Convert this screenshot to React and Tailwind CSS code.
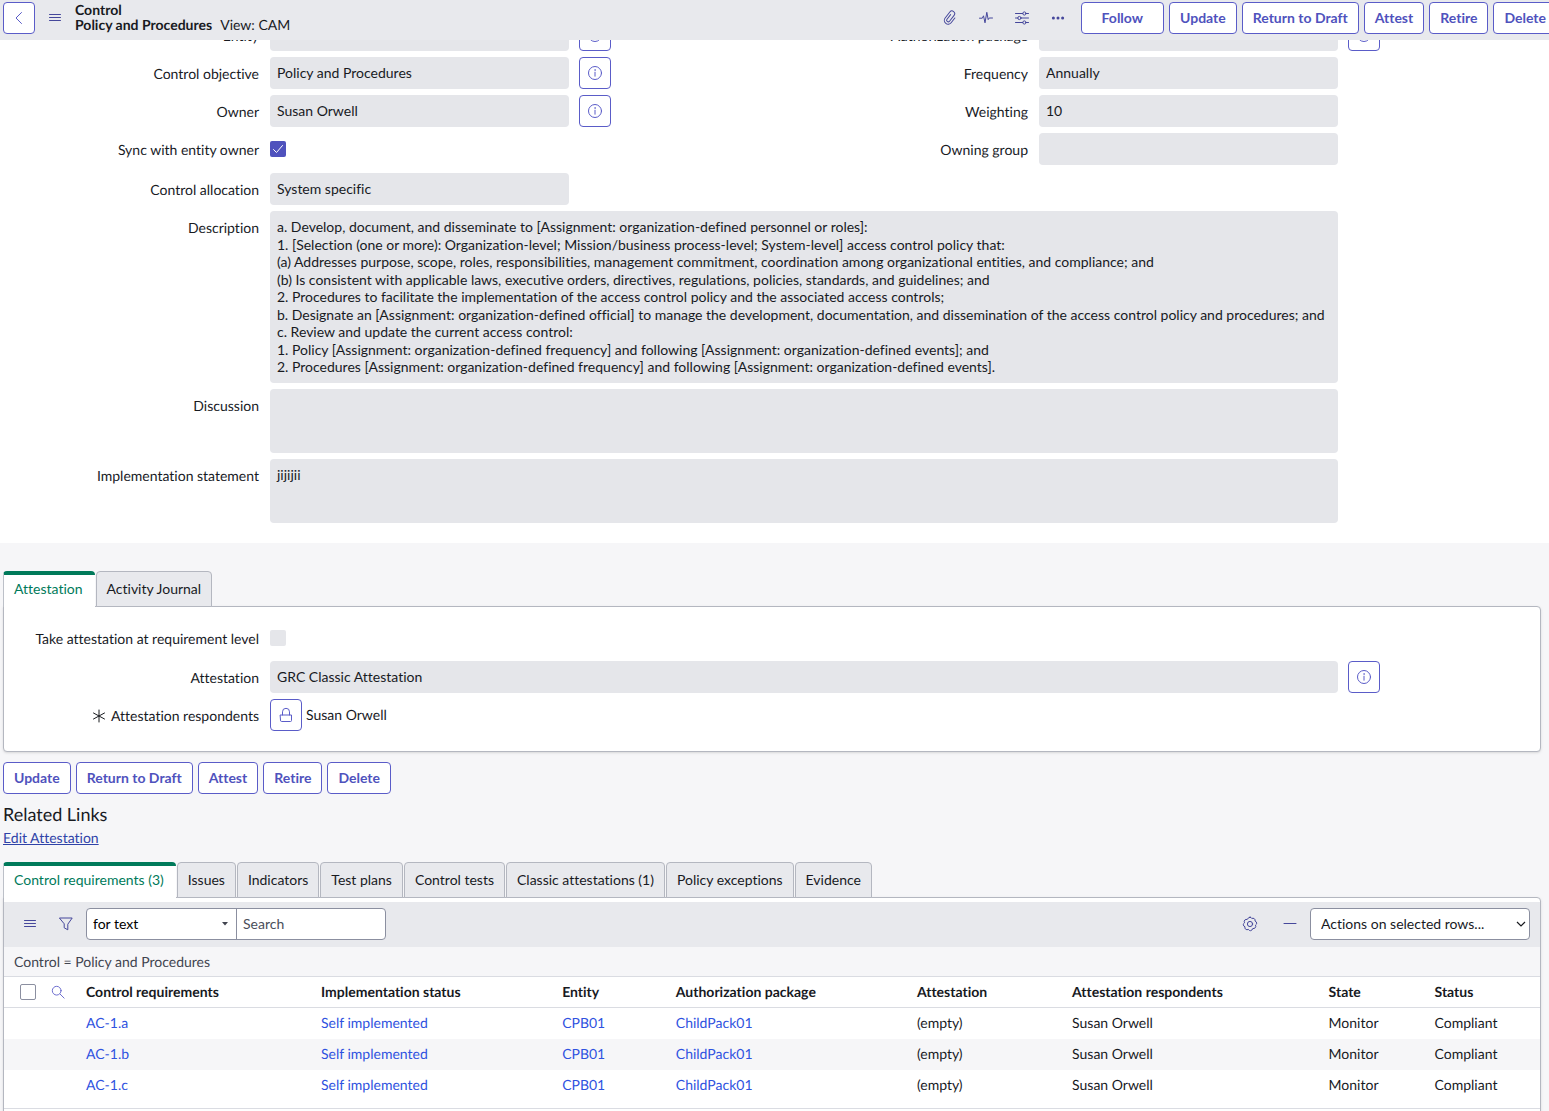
import { useState } from "react";

const requirementRows = [
  { id: "AC-1.a", impl: "Self implemented", entity: "CPB01", pkg: "ChildPack01", attestation: "(empty)", respondent: "Susan Orwell", state: "Monitor", status: "Compliant" },
  { id: "AC-1.b", impl: "Self implemented", entity: "CPB01", pkg: "ChildPack01", attestation: "(empty)", respondent: "Susan Orwell", state: "Monitor", status: "Compliant" },
  { id: "AC-1.c", impl: "Self implemented", entity: "CPB01", pkg: "ChildPack01", attestation: "(empty)", respondent: "Susan Orwell", state: "Monitor", status: "Compliant" },
];

const columns = [
  "Control requirements",
  "Implementation status",
  "Entity",
  "Authorization package",
  "Attestation",
  "Attestation respondents",
  "State",
  "Status",
];

const relatedTabs = [
  "Control requirements (3)",
  "Issues",
  "Indicators",
  "Test plans",
  "Control tests",
  "Classic attestations (1)",
  "Policy exceptions",
  "Evidence",
];

const formActions = ["Update", "Return to Draft", "Attest", "Retire", "Delete"];

const description = [
  "a. Develop, document, and disseminate to [Assignment: organization-defined personnel or roles]:",
  "1. [Selection (one or more): Organization-level; Mission/business process-level; System-level] access control policy that:",
  "(a) Addresses purpose, scope, roles, responsibilities, management commitment, coordination among organizational entities, and compliance; and",
  "(b) Is consistent with applicable laws, executive orders, directives, regulations, policies, standards, and guidelines; and",
  "2. Procedures to facilitate the implementation of the access control policy and the associated access controls;",
  "b. Designate an [Assignment: organization-defined official] to manage the development, documentation, and dissemination of the access control policy and procedures; and",
  "c. Review and update the current access control:",
  "1. Policy [Assignment: organization-defined frequency] and following [Assignment: organization-defined events]; and",
  "2. Procedures [Assignment: organization-defined frequency] and following [Assignment: organization-defined events].",
].join("\n");

function Icon({ size = 16, className = "", children }) {
  return (
    <svg
      width={size}
      height={size}
      viewBox="0 0 16 16"
      fill="none"
      stroke="currentColor"
      strokeWidth="1"
      strokeLinecap="round"
      strokeLinejoin="round"
      className={`shrink-0 ${className}`}
      aria-hidden="true"
    >
      {children}
    </svg>
  );
}

const MenuIcon = () => (
  <Icon><path d="M2.500 4.500h11M2.500 7.500h11M2.500 10.500h11" /></Icon>
);

const InfoIcon = () => (
  <Icon>
    <circle cx="8" cy="8" r="6.5" />
    <path d="M8 7.2v4" />
    <circle cx="8" cy="5" r="0.4" fill="currentColor" strokeWidth="0.6" />
  </Icon>
);

const PaperclipIcon = () => (
  <Icon>
    <g transform="rotate(38 8 8)">
      <path d="M11.8 5v6a3.800 3.800 0 0 1-7.600 0V3.400a2.700 2.700 0 0 1 5.400 0v7.400a1.600 1.600 0 0 1-3.200 0V5" />
    </g>
  </Icon>
);

const PulseIcon = () => (
  <Icon><path d="M1.500 8.200h2.800l1.200-2.400 1.500 7L8.800 2.300l1.400 7.300 1-1.600h3.300" /></Icon>
);

const SlidersIcon = () => (
  <Icon>
    <path d="M1.5 3.5h7.3M12 3.5h2.5M1.5 8h2.3M7 8h7.5M1.5 12.5h7.3M12 12.5h2.5" />
    <circle cx="10.4" cy="3.5" r="1.6" />
    <circle cx="5.4" cy="8" r="1.6" />
    <circle cx="10.4" cy="12.5" r="1.6" />
  </Icon>
);

const DotsIcon = () => (
  <Icon>
    <g fill="currentColor" stroke="none">
      <circle cx="3.4" cy="8" r="1.5" />
      <circle cx="8" cy="8" r="1.5" />
      <circle cx="12.6" cy="8" r="1.5" />
    </g>
  </Icon>
);

const GearIcon = () => (
  <Icon>
    <path d="M8 1.2Q9.3 1.1 9.8 2.5Q11 1.8 12.3 2.7Q13.5 3.7 13 5Q14.6 5.6 14.7 7.2Q14.7 8.3 13.5 9.1Q14.2 10.6 13.2 11.8Q12.2 12.8 10.8 12.5Q10.2 14.4 8.6 14.7Q7.2 14.8 6.4 13.4Q4.9 14.2 3.6 13.2Q2.5 12.2 3 10.8Q1.4 10.2 1.3 8.7Q1.3 7.5 2.5 6.8Q1.8 5.2 2.8 4Q3.9 3 5.2 3.5Q6.2 1.3 8 1.2z" />
    <circle cx="8" cy="8" r="2.6" />
  </Icon>
);

function Button({ children, className = "px-[10px]" }) {
  return (
    <button className={`h-8 shrink-0 rounded border border-[#5a5cc8] bg-white text-sm font-bold text-[#4f52bd] ${className}`}>
      {children}
    </button>
  );
}

function IconButton({ label, children }) {
  return (
    <button
      aria-label={label}
      className="flex h-8 w-8 shrink-0 items-center justify-center rounded border border-[#5a5cc8] bg-white text-[#5a5cc8]"
    >
      {children}
    </button>
  );
}

function ToolButton({ label, children }) {
  return (
    <button aria-label={label} className="flex h-8 w-9 shrink-0 items-center justify-center text-[#45479b]">
      {children}
    </button>
  );
}

function FieldRow({ id, label, required, info, align = "items-center", children }) {
  return (
    <div className={`flex ${align}`}>
      <label htmlFor={id} className="flex min-h-8 w-[270px] shrink-0 items-center justify-end pt-[2px] pr-[11px] text-right">
        {required && (
          <Icon className="mr-1"><path d="M8 2v12M2.5 5l11 6M13.5 5l-11 6" /></Icon>
        )}
        {label}
      </label>
      <div className="flex min-w-0 flex-1 items-center">{children}</div>
      <div className="w-[200px] shrink-0 pl-[10px]">
        {info && <IconButton label={`Preview ${label}`}><InfoIcon /></IconButton>}
      </div>
    </div>
  );
}

function TextField({ id, label, value, info }) {
  return (
    <FieldRow id={id} label={label} info={info}>
      <input id={id} readOnly defaultValue={value} className="h-8 w-full min-w-0 rounded-sm bg-[#e5e6ea] px-[7px] pb-[2px] outline-none" />
    </FieldRow>
  );
}

function AreaField({ id, label, value, className }) {
  return (
    <FieldRow id={id} label={label} align="items-start">
      <textarea
        id={id}
        readOnly
        defaultValue={value}
        className={`block w-full resize-none overflow-hidden rounded-sm bg-[#e5e6ea] p-[7px] leading-tight outline-none ${className}`}
      />
    </FieldRow>
  );
}

function Tabs({ tabs, active, onSelect }) {
  return (
    <div role="tablist" className="relative z-10 -mb-px flex gap-px">
      {tabs.map((tab) => (
        <button
          key={tab}
          role="tab"
          aria-selected={tab === active}
          onClick={() => onSelect(tab)}
          className={
            tab === active
              ? "h-9 rounded-t border-t-4 border-l border-t-[#007a5a] border-l-[#bcc0c8] bg-white pr-3 pb-[5px] pl-[10px] text-[#007a5a]"
              : "h-9 rounded-t border border-[#b4b7c0] bg-[#e8e9ed] px-[10px]"
          }
        >
          {tab}
        </button>
      ))}
    </div>
  );
}

export default function App() {
  const [formTab, setFormTab] = useState("Attestation");
  const [listTab, setListTab] = useState(relatedTabs[0]);

  return (
    <div className="min-h-screen overflow-hidden bg-[#f6f6f8] font-['Lato',sans-serif] text-sm text-[#181a1f] [font-variant-ligatures:none] [text-rendering:geometricPrecision]">
      {/* Form header */}
      <header className="flex h-10 items-start overflow-hidden bg-[#e8e9ed] pt-[2px] pl-[3px]">
        <IconButton label="Back"><Icon><path d="M10.5 2.5 5 8l5.500 5.500" /></Icon></IconButton>
        <div className="ml-[2px] flex"><ToolButton label="Form menu"><MenuIcon /></ToolButton></div>
        <div className="ml-[2px] leading-[15px]">
          <h1 className="font-bold">Control</h1>
          <p><span className="font-bold">Policy and Procedures</span><span className="ml-2">View: CAM</span></p>
        </div>
        <div className="-mr-2 ml-auto flex gap-[5px]">
          <div className="flex">
            <ToolButton label="Attachments"><PaperclipIcon /></ToolButton>
            <ToolButton label="Activity"><PulseIcon /></ToolButton>
            <ToolButton label="Personalize form"><SlidersIcon /></ToolButton>
            <ToolButton label="More options"><DotsIcon /></ToolButton>
          </div>
          <Button className="px-5">Follow</Button>
          {formActions.map((name) => <Button key={name}>{name}</Button>)}
        </div>
      </header>

      {/* Record fields, scrolled a little under the header */}
      <main className="overflow-hidden bg-white pr-[11px] pb-5">
        <div className="-mt-[21px] flex flex-col gap-[6px]">
          <div className="grid grid-cols-2">
            <div className="flex flex-col gap-[6px]">
              <TextField id="entity" label="Entity" value="CPB01" info />
              <TextField id="objective" label="Control objective" value="Policy and Procedures" info />
              <TextField id="owner" label="Owner" value="Susan Orwell" info />
              <FieldRow id="sync" label="Sync with entity owner">
                <span className="grid h-4 w-4">
                  <input
                    id="sync"
                    type="checkbox"
                    defaultChecked
                    className="col-start-1 row-start-1 h-4 w-4 appearance-none rounded-[2px] bg-[#d5d6de] checked:bg-[#4f52bd]"
                  />
                  <Icon className="pointer-events-none col-start-1 row-start-1 text-white"><path d="m3.500 8.500 3 3 6-7" /></Icon>
                </span>
              </FieldRow>
              <div className="pt-[2px]">
                <TextField id="allocation" label="Control allocation" value="System specific" />
              </div>
            </div>
            <div className="flex flex-col gap-[6px]">
              <TextField id="package" label="Authorization package" value="ChildPack01" info />
              <TextField id="frequency" label="Frequency" value="Annually" />
              <TextField id="weighting" label="Weighting" value="10" />
              <TextField id="group" label="Owning group" value="" />
            </div>
          </div>
          <AreaField id="description" label="Description" value={description} className="h-[172px]" />
          <AreaField id="discussion" label="Discussion" value="" className="h-16" />
          <AreaField id="statement" label="Implementation statement" value="jijijii" className="h-16" />
        </div>
      </main>

      <div className="pt-7 pr-2 pl-[3px]">
        <Tabs tabs={["Attestation", "Activity Journal"]} active={formTab} onSelect={setFormTab} />
        <section className="rounded-b rounded-tr border border-[#b4b7c0] bg-white pt-[15px] pr-[2px] pb-5 shadow">
          <div className="-ml-1 flex flex-col gap-[6px]">
            <FieldRow id="level" label="Take attestation at requirement level">
              <input id="level" type="checkbox" className="h-4 w-4 appearance-none rounded-[2px] bg-[#e5e6ea] checked:bg-[#4f52bd]" />
            </FieldRow>
            <div className="pt-px">
              <TextField id="attestation" label="Attestation" value="GRC Classic Attestation" info />
            </div>
            <FieldRow id="respondents" label="Attestation respondents" required>
              <button
                id="respondents"
                aria-label="Unlock respondents"
                className="mr-1 flex h-8 w-8 items-center justify-center rounded border border-[#5a5cc8] text-[#5a5cc8]"
              >
                <Icon><path d="M2.500 8h11v5.500q0 1-1 1h-9q-1 0-1-1zM4.500 8V4.800a3.500 3.500 0 0 1 7 0V8" /></Icon>
              </button>
              Susan Orwell
            </FieldRow>
          </div>
        </section>

        <div className="mt-[10px] flex gap-[5px]">
          {formActions.map((name) => <Button key={name}>{name}</Button>)}
        </div>

        <h2 className="mt-2 text-lg leading-6">Related Links</h2>
        <a href="#edit" className="inline-block leading-6 text-[#2f43a8] underline">Edit Attestation</a>

        <div className="mt-3">
          <Tabs tabs={relatedTabs} active={listTab} onSelect={setListTab} />
        </div>
        <section className="rounded-tr border border-[#b4b7c0] bg-white pt-1 shadow">
          <div className="flex h-[45px] items-center bg-[#e8e9ed] pr-[10px] pb-px pl-2">
            <ToolButton label="List menu"><MenuIcon /></ToolButton>
            <ToolButton label="Filter"><Icon><path d="M1.800 2h12.400L9.800 8.200v5.600l-3.600-2V8.200z" /></Icon></ToolButton>
            <div className="ml-[2px] flex h-8 w-[300px] rounded border border-[#8b8fa0] bg-white">
              <div className="grid flex-1 items-center border-r border-[#8b8fa0]">
                <select aria-label="Search field" className="col-start-1 row-start-1 h-full w-full appearance-none px-[6px] text-black outline-none">
                  <option>for text</option>
                </select>
                <svg width="6" height="4" viewBox="0 0 6 4" className="pointer-events-none col-start-1 row-start-1 mr-2 justify-self-end" aria-hidden="true">
                  <path d="M0 0h6L3 3.500z" fill="#41444f" />
                </svg>
              </div>
              <input aria-label="Search" placeholder="Search" className="w-[148px] px-[6px] outline-none placeholder:text-[#4a4e5a]" />
            </div>
            <div className="ml-auto flex items-center">
              <ToolButton label="List settings"><GearIcon /></ToolButton>
              <span className="ml-1 flex"><ToolButton label="Collapse list"><Icon><path d="M2 7.500h12" /></Icon></ToolButton></span>
              <div className="ml-[2px] grid w-[220px] items-center">
                <select
                  aria-label="Actions on selected rows"
                  className="col-start-1 row-start-1 h-8 w-full appearance-none rounded border border-[#8b8fa0] bg-white px-[10px] outline-none"
                >
                  <option>Actions on selected rows...</option>
                </select>
                <svg width="10" height="6" viewBox="0 0 10 6" fill="none" stroke="#181a1f" strokeWidth="1.200" className="pointer-events-none col-start-1 row-start-1 mr-1 justify-self-end" aria-hidden="true">
                  <path d="M1 1l4 4 4-4" />
                </svg>
              </div>
            </div>
          </div>
          <p className="h-[29px] bg-[#f6f6f8] px-[10px] leading-[29px] text-[#41444f]">Control = Policy and Procedures</p>
          <table className="w-full table-fixed border-y border-[#dadce2] text-left">
            <colgroup>
              <col className="w-[82px]" />
              <col className="w-[15.3%]" />
              <col className="w-[15.7%]" />
              <col className="w-[7.4%]" />
              <col className="w-[15.7%]" />
              <col className="w-[10.1%]" />
              <col className="w-[16.7%]" />
              <col className="w-[6.9%]" />
              <col />
            </colgroup>
            <thead>
              <tr className="h-[31px] border-b border-[#dadce2]">
                <th>
                  <div className="flex items-center gap-[15px] pl-4">
                    <input type="checkbox" aria-label="Select all rows" className="h-4 w-4 appearance-none rounded-[2px] border border-[#8b8fa0] bg-white checked:bg-[#4f52bd]" />
                    <button aria-label="Search columns" className="text-[#5a5cc8]">
                      <Icon size={14}><circle cx="6.500" cy="6.500" r="5" /><path d="m10.500 10.500 4.500 4.500" /></Icon>
                    </button>
                  </div>
                </th>
                {columns.map((name) => <th key={name} scope="col" className="font-bold whitespace-nowrap">{name}</th>)}
              </tr>
            </thead>
            <tbody>
              {requirementRows.map((row) => (
                <tr key={row.id} className="h-[31px] even:bg-[#f6f6f8]">
                  <td />
                  <td><a href="#req" className="text-[#2e52e0]">{row.id}</a></td>
                  <td><a href="#impl" className="text-[#2e52e0]">{row.impl}</a></td>
                  <td><a href="#entity" className="text-[#2e52e0]">{row.entity}</a></td>
                  <td><a href="#package" className="text-[#2e52e0]">{row.pkg}</a></td>
                  <td>{row.attestation}</td>
                  <td>{row.respondent}</td>
                  <td>{row.state}</td>
                  <td>{row.status}</td>
                </tr>
              ))}
            </tbody>
            <tfoot>
              <tr className="h-2"><td colSpan={9} /></tr>
            </tfoot>
          </table>
          <div className="h-8" />
        </section>
      </div>
    </div>
  );
}
